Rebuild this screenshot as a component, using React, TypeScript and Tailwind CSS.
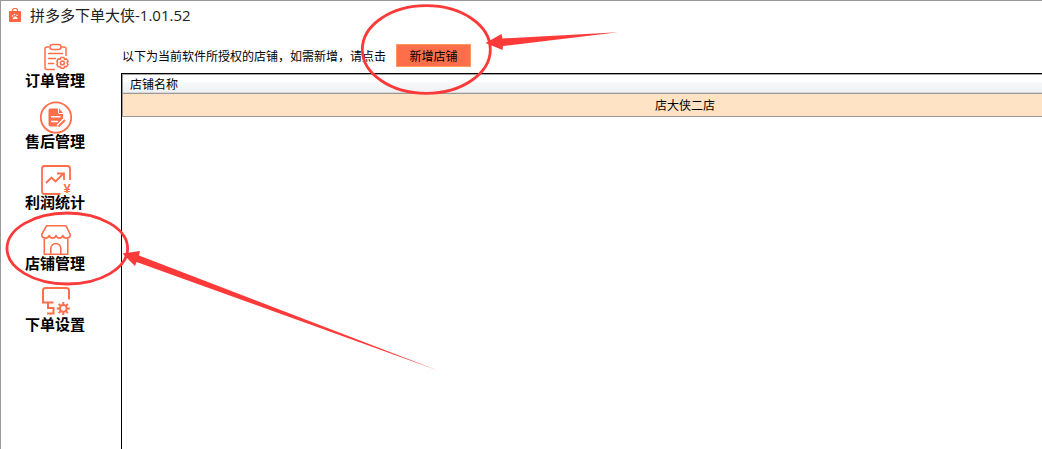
import React, { useState } from "react";

const OrderIcon: React.FC = () => (
  <svg width="32" height="32" viewBox="0 0 32 32" fill="none" stroke="#ff6e4a" strokeWidth="1.5" className="overflow-visible">
    <path d="M9 7H7a2 2 0 0 0-2 2v18.500a2 2 0 0 0 2 2h8M21 7h3a2 2 0 0 1 2 2v7" />
    <rect x="10" y="4.500" width="11" height="5" rx="2.500" />
    <path d="M8.500 13.500h14M8.500 18.500h7M8.500 23.500h5" strokeLinecap="round" />
    <path
      d="M21 17.500h2.800l.8 1.700 1.900-.3 1.500 2.300-.9 1.600.9 1.700-1.500 2.300-1.900-.3-.8 1.700H21l-.9-1.700-1.900.3-1.400-2.300.9-1.700-.9-1.600 1.400-2.300 1.900.3z"
      strokeWidth="1.500"
    />
    <circle cx="22.400" cy="22.900" r="1.900" strokeWidth="1.500" />
  </svg>
);

const AfterSaleIcon: React.FC = () => (
  <svg width="32" height="32" viewBox="0 0 32 32" fill="none" className="overflow-visible">
    <circle cx="16" cy="16.500" r="15.200" stroke="#ff6e4a" strokeWidth="1.800" />
    <path d="M10.500 7.500H18v4a1.500 1.500 0 0 0 1.500 1.500H23v6.500L17.500 25.500h-7a2 2 0 0 1-2-2v-14a2 2 0 0 1 2-2z" fill="#ff6e4a" />
    <path d="M19 7.500l4 4.500h-4z" fill="#ff6e4a" />
    <path d="M11 15.700h9.500M11 20.500h7" stroke="#fff" strokeWidth="1.400" />
    <path d="M18 25.500l7-7" stroke="#fff" strokeWidth="4" />
    <path d="M18.500 25.500l6.500-6.500" stroke="#ff6e4a" strokeWidth="2" />
  </svg>
);

const ProfitIcon: React.FC = () => (
  <svg width="32" height="32" viewBox="0 0 32 32" fill="none" stroke="#ff6e4a" strokeWidth="1.800" className="overflow-visible">
    <path d="M20.500 32H4.500A2.500 2.500 0 0 1 2 29.500v-23A2.500 2.500 0 0 1 4.500 4h23A2.500 2.500 0 0 1 30 6.500V18" />
    <path d="M6 21l5.500-5.500 4 4 8-8" />
    <path d="M17 11.500h7v6.500" />
    <text x="27" y="31" textAnchor="middle" fill="#ff6e4a" stroke="none" fontFamily="Liberation Sans, sans-serif" fontSize="13" fontWeight="700">
      ¥
    </text>
  </svg>
);

const ShopIcon: React.FC = () => (
  <svg width="32" height="32" viewBox="0 0 32 32" fill="none" stroke="#ff6e4a" strokeWidth="1.600" strokeLinejoin="round" className="overflow-visible">
    <path d="M6.500 2.800h19.500L30.300 11.500c0 2.200-1.800 3.600-3.800 3.600s-3.200-.9-3.700-2.600c-.5 1.700-1.700 2.600-3.400 2.600s-2.800-.9-3.400-2.600c-.5 1.700-1.700 2.600-3.400 2.600s-2.900-.9-3.400-2.600c-.5 1.700-1.700 2.600-3.700 2.600s-3.800-1.400-3.800-3.600z" />
    <path d="M4.300 15.500V31.200h23.500V15.500" />
    <path d="M10.800 31v-5.500a5 5 0 0 1 10 0V31" />
  </svg>
);

const SettingIcon: React.FC = () => (
  <svg width="32" height="32" viewBox="0 0 32 32" fill="none" stroke="#ff6e4a" strokeWidth="2" className="overflow-visible">
    <path d="M29 15.500V6.500A2.500 2.500 0 0 0 26.500 4h-21A2.500 2.500 0 0 0 3 6.500V18.500h10.500" />
    <path d="M8 18.500V24h5.500v5.500H7" />
    <circle cx="23.300" cy="24.500" r="3.400" />
    <path
      d="M23.300 18v3M23.300 28v3M16.800 24.500h3M26.800 24.500h3M18.700 19.900l2.100 2.100M25.800 27l2.100 2.100M18.700 29.100l2.100-2.100M25.800 22l2.100-2.100"
      strokeWidth="2"
    />
  </svg>
);

const BagIcon: React.FC = () => (
  <svg width="12" height="14" viewBox="0 0 12 14" fill="none">
    <path d="M3.500 4V2.500a2 2 0 0 1 2-2h1a2 2 0 0 1 2 2V4" stroke="#ff6543" strokeWidth="1.200" />
    <rect y="3" width="12" height="11" rx="1" fill="#ff6543" />
    <path d="M3.500 10.500l2-2h1.500l2 2.500H4z" fill="#fff" />
    <circle cx="3.500" cy="8" r=".8" fill="#fff" />
    <circle cx="5.500" cy="6.500" r=".8" fill="#fff" />
    <circle cx="8" cy="7.300" r=".8" fill="#fff" />
  </svg>
);

const menus = [
  { name: "订单管理", icon: <OrderIcon /> },
  { name: "售后管理", icon: <AfterSaleIcon /> },
  { name: "利润统计", icon: <ProfitIcon /> },
  { name: "店铺管理", icon: <ShopIcon /> },
  { name: "下单设置", icon: <SettingIcon /> },
];

const App: React.FC = () => {
  const [active, setActive] = useState<string>("店铺管理");
  const [shops, setShops] = useState<string[]>(["店大侠二店"]);

  const handleAddShop = () => {
    setShops([...shops, "新店铺"]);
  };

  return (
    <div className="relative flex min-h-screen flex-col overflow-hidden border-t border-l border-[#999999] bg-white font-['Noto_Sans_CJK_SC',sans-serif] text-xs text-black">
      <header className="flex h-[27px] items-center gap-[9px] pl-2">
        <BagIcon />
        <h1 className="font-['Open_Sans','Noto_Sans_CJK_SC',sans-serif] text-[15px] leading-5 text-[#222222]">
          拼多多下单大侠-1.01.52
        </h1>
      </header>

      <div className="flex flex-1">
        <nav className="flex w-[120px] shrink-0 flex-col pt-3 pl-6">
          {menus.map((menu) => (
            <button
              key={menu.name}
              type="button"
              aria-current={active === menu.name ? "page" : undefined}
              onClick={() => setActive(menu.name)}
              className="flex h-[61px] w-[60px] flex-col items-center"
            >
              <span className="pl-[2px]">{menu.icon}</span>
              <span className="text-[15px] leading-4 font-bold">{menu.name}</span>
            </button>
          ))}
        </nav>

        <main className="flex min-w-0 flex-1 flex-col">
          <div className="flex items-center gap-[10px] pt-4 pb-[6px] pl-px">
            <p className="whitespace-nowrap">以下为当前软件所授权的店铺，如需新增，请点击</p>
            <button
              type="button"
              onClick={handleAddShop}
              className="h-[23px] w-[75px] border border-[#ff9a5c] bg-[#ff6e4a] leading-5"
            >
              新增店铺
            </button>
          </div>

          <div className="flex-1 overflow-hidden border-t border-l border-black">
            {/* the single column is wider than the window and runs off to the right */}
            <table className="w-full min-w-[1125px] border-separate border-spacing-0 border-l border-[#999999]">
              <thead>
                <tr>
                  <th className="h-[19px] border-t border-b border-t-[#a5a5a5] border-b-[#d8d8d8] bg-linear-to-b from-white from-40% via-[#f7f8fa] via-45% to-[#f0f1f2] p-0 pl-[7px] text-left leading-4 font-normal">
                    店铺名称
                  </th>
                </tr>
              </thead>
              <tbody>
                {shops.map((shop, index) => (
                  <tr key={index}>
                    <td className="h-6 border-y border-[#999999] bg-[#ffe3c4] p-0 text-center leading-4">{shop}</td>
                  </tr>
                ))}
              </tbody>
            </table>
          </div>
        </main>
      </div>

      {/* hand-drawn marks over the page */}
      <svg
        width="640"
        height="400"
        viewBox="1 1 640 400"
        className="pointer-events-none absolute top-0 left-0"
        aria-hidden="true"
      >
        <g fill="none" stroke="#fb3a39" strokeWidth="2.800">
          <ellipse cx="426.300" cy="49.500" rx="64" ry="43.800" />
          <ellipse cx="67.300" cy="248.500" rx="60.300" ry="35.500" />
        </g>
        <g fill="#fb3a39">
          <path d="M485.500 43L501.500 34L502.500 38.500L618 32.200L503 46L502.500 50z" />
          <path d="M122.500 253.500L140 251L139 255.500L438 370.500L136.500 262L135 266z" />
        </g>
      </svg>
    </div>
  );
};

export default App;
